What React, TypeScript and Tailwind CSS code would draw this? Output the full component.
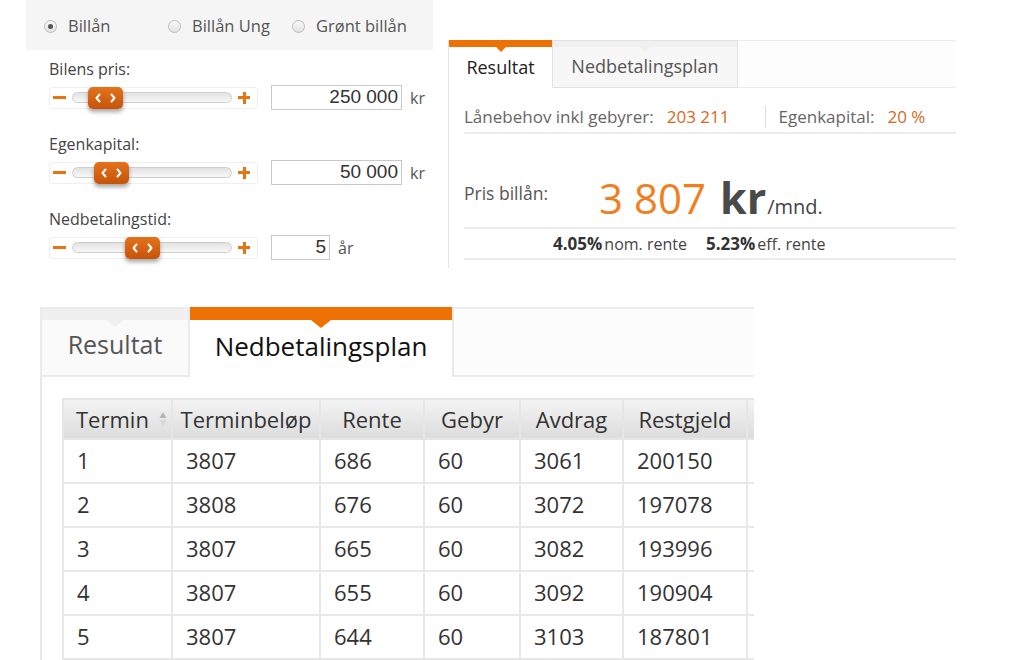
import React from 'react';

// Billån-kalkulator: input sliders, result card and the repayment table.

const rows = [
  ['1', '3807', '686', '60', '3061', '200150'],
  ['2', '3808', '676', '60', '3072', '197078'],
  ['3', '3807', '665', '60', '3082', '193996'],
  ['4', '3807', '655', '60', '3092', '190904'],
  ['5', '3807', '644', '60', '3103', '187801'],
];

function Radio({ label, checked }: { label: string; checked?: boolean }) {
  return (
    <div className="flex w-[124px] items-center">
      <span className="flex h-[13px] w-[13px] items-center justify-center rounded-full border border-[#bdbdbd] bg-gradient-to-b from-[#fafafa] to-[#e2e2e2]">
        {checked && <span className="h-[5px] w-[5px] rounded-full bg-[#555]" />}
      </span>
      <span className="ml-[11px] text-[16.5px] text-[#555]">{label}</span>
    </div>
  );
}

function Chevron({ dir }: { dir: 'l' | 'r' }) {
  return (
    <svg width="6" height="10" viewBox="0 0 6 10" fill="none">
      <path
        d={dir === 'l' ? 'M4.5 1.5 L1.5 5 L4.5 8.5' : 'M1.5 1.5 L4.5 5 L1.5 8.5'}
        stroke="white"
        strokeWidth="2"
        strokeLinecap="round"
        strokeLinejoin="round"
      />
    </svg>
  );
}

function Slider({ handle }: { handle: string }) {
  return (
    <div className="flex h-[22px] w-[209px] items-center rounded-[3px] border border-[#efefef] bg-white">
      <span className="ml-[3px] h-[3px] w-[13px] bg-[#e8740f]" />
      <div className="relative ml-[6px] h-[11px] w-[160px] rounded-full border border-[#cfcfcf] bg-gradient-to-b from-[#e2e2e2] to-[#f7f7f7]">
        <div
          className={`absolute top-1/2 flex h-[22px] w-[35px] -translate-y-1/2 items-center justify-between rounded-[5px] bg-gradient-to-b from-[#e4721a] to-[#c5540a] px-[7px] shadow-[0_3px_4px_rgba(0,0,0,0.35)] ${handle}`}
        >
          <Chevron dir="l" />
          <Chevron dir="r" />
        </div>
      </div>
      <span className="relative ml-[6px] h-[12px] w-[12px]">
        <span className="absolute left-0 top-[4.5px] h-[3px] w-[12px] bg-[#e8740f]" />
        <span className="absolute left-[4.5px] top-0 h-[12px] w-[3px] bg-[#e8740f]" />
      </span>
    </div>
  );
}

function Field({ label, handle, value, unit, narrow }: { label: string; handle: string; value: string; unit: string; narrow?: boolean }) {
  return (
    <div className="flex flex-col">
      <span className="text-[16px] leading-[22px] text-[#444]">{label}</span>
      <div className="mt-[5px] flex h-[25px] items-center">
        <Slider handle={handle} />
        <div
          className={`ml-[13px] flex h-[25px] items-center justify-end border border-[#c8c8c8] bg-white pr-[3px] font-['Liberation_Sans',Arial,sans-serif] text-[19px] text-[#333] ${narrow ? 'w-[59px]' : 'w-[131px]'}`}
        >
          {value}
        </div>
        <span className="ml-[8px] text-[16px] text-[#555]">{unit}</span>
      </div>
    </div>
  );
}

function SortArrows() {
  return (
    <svg width="8" height="16" viewBox="0 0 8 16">
      <path d="M4 1 L7.5 7 L0.5 7 Z" fill="#b5b5b5" />
      <path d="M4 15 L7.5 9 L0.5 9 Z" fill="#d8d8d8" />
    </svg>
  );
}

export default function App() {
  return (
    <div className="h-[660px] w-[1024px] overflow-hidden bg-white font-['Open_Sans',sans-serif]">
      <div className="flex h-[268px]">
        {/* Left: loan type + sliders */}
        <div className="ml-[26px] w-[407px]">
          <div className="flex h-[50px] items-center bg-[#f5f5f5] pl-[18px] pt-[2px]">
            <Radio label="Billån" checked />
            <Radio label="Billån Ung" />
            <Radio label="Grønt billån" />
          </div>
          <div className="flex flex-col gap-[23px] pl-[23px] pt-[8px]">
            <Field label="Bilens pris:" handle="left-[15px]" value="250 000" unit="kr" />
            <Field label="Egenkapital:" handle="left-[21px]" value="50 000" unit="kr" />
            <Field label="Nedbetalingstid:" handle="left-[52px]" value="5" unit="år" narrow />
          </div>
        </div>

        {/* Right: result card */}
        <div className="ml-[15px] mt-[40px] flex h-[228px] w-[508px] flex-col border-l border-[#e4e4e4]">
          <div className="flex h-[48px]">
            <div className="relative flex w-[103px] items-center justify-center bg-white pt-[6px] text-[18px] text-[#222]">
              <span className="absolute left-0 top-0 h-[7px] w-full bg-[#ee7203]" />
              <span className="absolute left-1/2 top-[7px] h-0 w-0 -translate-x-1/2 border-x-[5px] border-t-[5px] border-x-transparent border-t-[#ee7203]" />
              Resultat
            </div>
            <div className="relative flex w-[186px] items-center justify-center border border-[#e2e2e2] bg-[#f7f7f7] pt-[5px] text-[18px] text-[#555]">
              <span className="absolute left-0 top-0 h-[6px] w-full bg-[#f0f0f0]" />
              <span className="absolute left-1/2 top-[6px] h-0 w-0 -translate-x-1/2 border-x-[5px] border-t-[5px] border-x-transparent border-t-[#f0f0f0]" />
              Nedbetalingsplan
            </div>
            <div className="flex-1 border-y border-[#ececec] bg-[#fdfdfd]" />
          </div>
          <div className="ml-[15px] flex flex-col">
            <div className="flex h-[46px] items-center border-b-2 border-[#ececec] pt-[14px] text-[17px]">
              <span className="text-[#666]">Lånebehov inkl gebyrer:</span>
              <span className="ml-[13px] text-[#d4691c]">203 211</span>
              <span className="ml-[35px] h-[22px] w-px bg-[#dcdcdc]" />
              <span className="ml-[13px] text-[#666]">Egenkapital:</span>
              <span className="ml-[13px] text-[#d4691c]">20 %</span>
            </div>
            <div className="flex h-[95px] items-start border-b-2 border-[#ececec]">
              <span className="mt-[48px] w-[135px] text-[17.5px] leading-[22px] text-[#555]">Pris billån:</span>
              <div className="mt-[42px] flex items-baseline">
                <span className="text-[42px] leading-none text-[#f0801f]">3 807</span>
                <span className="ml-[14px] text-[43px] font-bold leading-none text-[#4a4a4a]">kr</span>
                <span className="ml-[1px] text-[20px] leading-none text-[#444]">/mnd.</span>
              </div>
            </div>
            <div className="flex h-[31px] items-center border-b-2 border-[#ececec] pl-[89px] text-[#333]">
              <span className="text-[17px] font-bold">4.05%</span>
              <span className="ml-[2px] text-[16px] text-[#444]">nom. rente</span>
              <span className="ml-[19px] text-[17px] font-bold">5.23%</span>
              <span className="ml-[2px] text-[16px] text-[#444]">eff. rente</span>
            </div>
          </div>
        </div>
      </div>

      {/* Bottom: repayment plan */}
      <div className="ml-[40px] mt-[39px] w-[714px]">
        <div className="flex h-[70px]">
          <div className="relative flex w-[150px] items-center justify-center border-2 border-[#ebebeb] bg-[#fafafa] pt-[6px] text-[25px] text-[#555]">
            <span className="absolute left-0 top-0 h-[11px] w-full bg-[#f0f0f0]" />
            <span className="absolute left-1/2 top-[11px] h-0 w-0 -translate-x-1/2 border-x-[9px] border-t-[7px] border-x-transparent border-t-[#f0f0f0]" />
            Resultat
          </div>
          <div className="relative flex w-[264px] items-center justify-center border-r-2 border-[#e8e8e8] bg-white pt-[8px] text-[26px] text-[#111]">
            <span className="absolute left-0 top-0 h-[13px] w-full bg-[#ee7203]" />
            <span className="absolute left-1/2 top-[13px] h-0 w-0 -translate-x-1/2 border-x-[10px] border-t-[8px] border-x-transparent border-t-[#ee7203]" />
            Nedbetalingsplan
          </div>
          <div className="flex-1 border-y-2 border-[#ececec] bg-[#fcfcfc]" />
        </div>
        <div className="h-[283px] overflow-hidden border-l-2 border-[#e8e8e8] pl-[20px] pt-[21px]">
          <table className="w-[760px] table-fixed border-collapse text-left text-[22px] text-[#333]">
            <colgroup>
              <col className="w-[109px]" />
              <col className="w-[148px]" />
              <col className="w-[104px]" />
              <col className="w-[96px]" />
              <col className="w-[103px]" />
              <col className="w-[124px]" />
              <col className="w-[76px]" />
            </colgroup>
            <thead>
              <tr className="h-[40px] bg-gradient-to-b from-[#f4f4f4] to-[#dcdcdc]">
                <th className="border-2 border-[#e6e6e6] pl-[12px] font-normal">
                  <div className="flex items-center justify-between pr-[4px]">
                    <span>Termin</span>
                    <SortArrows />
                  </div>
                </th>
                {['Terminbeløp', 'Rente', 'Gebyr', 'Avdrag', 'Restgjeld', ''].map((h, i) => (
                  <th key={i} className="border-2 border-[#e6e6e6] text-center font-normal">
                    {h}
                  </th>
                ))}
              </tr>
            </thead>
            <tbody>
              {rows.map((r) => (
                <tr key={r[0]} className="h-[44px] bg-white">
                  {r.map((c, i) => (
                    <td key={i} className="border-2 border-[#e8e8e8] pl-[13px] pb-[2px]">
                      {c}
                    </td>
                  ))}
                  <td className="border-y-2 border-[#e8e8e8]" />
                </tr>
              ))}
            </tbody>
          </table>
        </div>
      </div>
    </div>
  );
}
